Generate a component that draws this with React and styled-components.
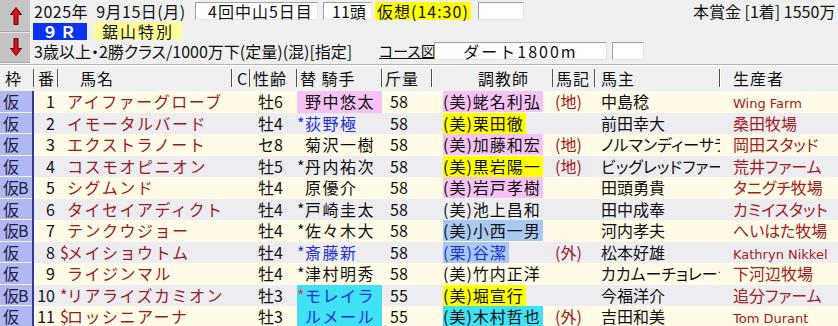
import styled, { createGlobalStyle } from "styled-components";

const GlobalStyle = createGlobalStyle`
  html, body { margin: 0; padding: 0; background: #f0f0f0; }
  body { font-family: "Noto Sans CJK JP", "Noto Sans", sans-serif; }
`;

const cols = "34px 24px 174px 18px 47px 85px 50px 121px 42px 125px 118px";

const hl = {
  pink: "#f7c3f7",
  yellow: "#ffff00",
  lblue: "#a9c9f1",
  cyan: "#3fe1f3",
  none: "transparent",
};

const ink = {
  black: "#101010",
  blue: "#1c2fe0",
  red: "#e0306a",
};

const rows = [
  { waku: "仮", no: 1, name: "アイファーグローブ", sex: "牡6", jockey: "野中悠太", jbg: "pink", kg: 58, trainer: "(美)蛯名利弘", tbg: "pink", mark: "(地)", owner: "中島稔", breeder: "Wing Farm", latin: true },
  { waku: "仮", no: 2, name: "イモータルバード", sex: "牡4", jp: "*", jockey: "荻野極", jc: "blue", kg: 58, trainer: "(美)栗田徹", tbg: "yellow", owner: "前田幸大", breeder: "桑田牧場" },
  { waku: "仮", no: 3, name: "エクストラノート", sex: "セ8", jockey: "菊沢一樹", kg: 58, trainer: "(美)加藤和宏", tbg: "pink", mark: "(地)", owner: "ノルマンディーサラブレッドレーシング", breeder: "岡田スタッド" },
  { waku: "仮", no: 4, name: "コスモオピニオン", sex: "牡5", jp: "*", jockey: "丹内祐次", kg: 58, trainer: "(美)黒岩陽一", tbg: "yellow", mark: "(地)", owner: "ビッグレッドファーム", breeder: "荒井ファーム" },
  { waku: "仮B", no: 5, name: "シグムンド", sex: "牡4", jockey: "原優介", kg: 58, trainer: "(美)岩戸孝樹", tbg: "pink", owner: "田頭勇貴", breeder: "タニグチ牧場" },
  { waku: "仮", no: 6, name: "タイセイアディクト", sex: "牡4", jp: "*", jockey: "戸崎圭太", kg: 58, trainer: "(美)池上昌和", owner: "田中成奉", breeder: "カミイスタット" },
  { waku: "仮B", no: 7, name: "テンクウジョー", sex: "牡4", jp: "*", jockey: "佐々木大", kg: 58, trainer: "(美)小西一男", tbg: "lblue", owner: "河内孝夫", breeder: "へいはた牧場" },
  { waku: "仮", no: 8, pre: "$", name: "メイショウトム", sex: "牡4", jp: "*", jockey: "斎藤新", jc: "blue", kg: 58, trainer: "(栗)谷潔", tbg: "lblue", tc: "blue", mark: "(外)", owner: "松本好雄", breeder: "Kathryn Nikkel", latin: true },
  { waku: "仮", no: 9, name: "ライジンマル", sex: "牡4", jp: "*", jockey: "津村明秀", kg: 58, trainer: "(美)竹内正洋", owner: "カカムーチョレーシング", breeder: "下河辺牧場" },
  { waku: "仮B", no: 10, pre: "*", name: "リアライズカミオン", sex: "牡3", jp: "*", jpc: "red", jockey: "モレイラ", jbg: "cyan", jc: "blue", kg: 55, trainer: "(美)堀宣行", tbg: "yellow", owner: "今福洋介", breeder: "追分ファーム" },
  { waku: "仮", no: 11, pre: "$", name: "ロッシニアーナ", sex: "牡3", jockey: "ルメール", jbg: "cyan", jc: "blue", kg: 55, trainer: "(美)木村哲也", tbg: "cyan", mark: "(外)", owner: "吉田和美", breeder: "Tom Durant", latin: true },
];

const Screen = styled.div`
  width: 838px;
  height: 326px;
  overflow: hidden;
  background: #f0f0f0;
  color: #101010;
  font-size: 16px;
`;

const Top = styled.div`
  display: flex;
  height: 63px;
`;

const ArrowCol = styled.div`
  width: 30px;
  display: flex;
  flex-direction: column;
  background: #c4c4c4;
`;

const ArrowBtn = styled.div`
  flex: 1;
  display: flex;
  align-items: center;
  justify-content: center;
  padding-left: 1px;
  border-top: 1px solid ${(p) => (p.$first ? "#c4c4c4" : "#e6e6e6")};
  border-bottom: 1px solid #a8a8a8;
`;

const Info = styled.div`
  flex: 1;
  display: flex;
  flex-direction: column;
  padding: 1px 0 0 4px;
`;

const InfoLine = styled.div`
  display: flex;
  align-items: center;
  height: 20px;
  white-space: nowrap;
`;

const Label = styled.span`
  display: inline-block;
  width: ${(p) => p.$w}px;
  margin-left: ${(p) => p.$ml || 0}px;
  letter-spacing: ${(p) => p.$ls || 0}px;
  font-size: ${(p) => p.$fs || 16}px;
  font-feature-settings: ${(p) => (p.$palt ? '"palt"' : "normal")};
  overflow: hidden;
  line-height: 20px;
  text-decoration: ${(p) => (p.$link ? "underline" : "none")};
`;

const Field = styled.span`
  display: inline-block;
  box-sizing: border-box;
  width: ${(p) => p.$w}px;
  height: 18px;
  margin-left: ${(p) => p.$ml || 0}px;
  line-height: 16px;
  background: #fff;
  border: 1px solid;
  border-color: #a0a0a0 #e4e4e4 #e4e4e4 #a0a0a0;
  text-align: ${(p) => p.$align || "left"};
  padding-left: ${(p) => p.$pl || 0}px;
  letter-spacing: ${(p) => p.$ls || 0}px;
`;

const Marker = styled.span`
  display: inline-block;
  margin-left: ${(p) => p.$ml || 0}px;
  padding: 0 2px;
  height: 18px;
  line-height: 18px;
  background: #ffff00;
  letter-spacing: 1px;
`;

const RaceNo = styled.span`
  display: inline-block;
  width: 54px;
  height: 17px;
  line-height: 17px;
  margin-left: -1px;
  background: #0c32f2;
  color: #fff;
  text-align: center;
  font-weight: 700;
  letter-spacing: 2px;
`;

const RaceName = styled.span`
  display: inline-block;
  width: 88px;
  height: 18px;
  line-height: 18px;
  margin-left: 7px;
  background: #ffff99;
  text-align: center;
  letter-spacing: 2px;
`;

const Prize = styled.span`
  margin-left: auto;
  width: 145px;
  overflow: hidden;
  line-height: 20px;
`;

const Divider = styled.div`
  height: 1px;
  margin-top: 1px;
  background: #b4b4b4;
  border-bottom: 1px solid #fff;
`;

const HeadRow = styled.div`
  display: grid;
  grid-template-columns: ${cols};
  height: 24px;
  margin-bottom: 1px;
`;

const HeadCell = styled.div`
  position: relative;
  line-height: 24px;
  padding-left: ${(p) => p.$pl || 0}px;
  white-space: nowrap;
  letter-spacing: 1px;

  &::after {
    content: "";
    display: ${(p) => (p.$last ? "none" : "block")};
    position: absolute;
    right: 0;
    top: 3px;
    bottom: 3px;
    width: 1px;
    background: #505050;
    box-shadow: 1px 0 0 #fff;
  }
`;

const Row = styled.div`
  display: grid;
  grid-template-columns: ${cols};
  height: 21.5px;
  background: ${(p) => (p.$odd ? "#ededf1" : "#fffbe6")};
`;

const Cell = styled.div`
  line-height: 21.5px;
  white-space: nowrap;
  overflow: hidden;
  padding-left: ${(p) => p.$pl || 0}px;
  text-align: ${(p) => p.$align || "left"};
  padding-right: ${(p) => p.$pr || 0}px;
  color: ${(p) => p.$color || "#101010"};
  letter-spacing: ${(p) => p.$ls || 0}px;
  background: ${(p) => (p.$bg ? hl[p.$bg] : "transparent")};
  font-feature-settings: ${(p) => (p.$palt ? '"palt"' : "normal")};
`;

const WakuCell = styled(Cell)`
  background: #b1b8f1;
  border-right: 2px solid #2d3a9a;
  box-shadow: inset 0 -1px 0 #f4f4ff;
  padding-left: 3px;
  letter-spacing: -1px;
  color: #20204a;
`;

const Prefix = styled.span`
  display: inline-block;
  width: ${(p) => p.$w}px;
  color: ${(p) => (p.$c ? ink[p.$c] : "inherit")};
  letter-spacing: 0;
`;

const Hl = styled.span`
  display: inline-block;
  height: 21px;
  padding-right: 2px;
  background: ${(p) => hl[p.$bg || "none"]};
  color: ${(p) => ink[p.$c || "black"]};
`;

const Latin = styled.span`
  font-family: "DejaVu Sans", "Liberation Sans", sans-serif;
  font-size: 13px;
  letter-spacing: 0;
`;

const Arrow = ({ down }) => (
  <svg width="12" height="18" viewBox="0 0 12 18">
    <polygon
      points="6,0.5 11.5,7.5 8,7.5 8,17.5 4,17.5 4,7.5 0.5,7.5"
      fill="#e41010"
      stroke="#5a0000"
      strokeWidth="1"
      transform={down ? "rotate(180 6 9)" : undefined}
    />
  </svg>
);

const heads = [
  { t: "枠", pl: 5 },
  { t: "番", pl: 4 },
  { t: "馬名", pl: 22 },
  { t: "C", pl: 5 },
  { t: "性齢", pl: 3 },
  { t: "替 騎手", pl: 3 },
  { t: "斤量", pl: 3 },
  { t: "調教師", pl: 46 },
  { t: "馬記", pl: 3 },
  { t: "馬主", pl: 6 },
  { t: "生産者", pl: 13 },
];

export default function App() {
  return (
    <>
      <GlobalStyle />
      <Screen>
        <Top>
          <ArrowCol>
            <ArrowBtn $first>
              <Arrow />
            </ArrowBtn>
            <ArrowBtn>
              <Arrow down />
            </ArrowBtn>
          </ArrowCol>
          <Info>
            <InfoLine>
              <Label $w={161} $ls={0.5}>2025年 &nbsp;9月15日(月)</Label>
              <Field $w={123} $pl={12} $ls={1}>4回中山5日目</Field>
              <Field $w={49} $ml={5} $pl={8}>11頭</Field>
              <Marker $ml={3}>仮想(14:30)</Marker>
              <Field $w={46} $ml={7} />
              <Prize>本賞金 [1着] 1550万 [2着] 620万</Prize>
            </InfoLine>
            <InfoLine>
              <RaceNo>９Ｒ</RaceNo>
              <RaceName>鋸山特別</RaceName>
            </InfoLine>
            <InfoLine>
              <Label $w={345} $palt>3歳以上・2勝クラス/1000万下(定量)(混)[指定]</Label>
              <Label $w={55} $fs={15} $palt $link>コース図</Label>
              <Field $w={173} $align="center" $ls={2}>ダート1800m</Field>
              <Field $w={32} $ml={5} />
            </InfoLine>
          </Info>
        </Top>
        <Divider />
        <HeadRow>
          {heads.map((h, i) => (
            <HeadCell key={h.t} $pl={h.pl} $last={i === heads.length - 1}>
              {h.t}
            </HeadCell>
          ))}
        </HeadRow>
        {rows.map((r, i) => (
          <Row key={r.no} $odd={i % 2 === 1}>
            <WakuCell>{r.waku}</WakuCell>
            <Cell $align="right" $pr={3}>{r.no}</Cell>
            <Cell $pl={2} $color="#981c1c" $ls={1.5}>
              <Prefix $w={7}>{r.pre}</Prefix>
              {r.name}
            </Cell>
            <Cell />
            <Cell $pl={8}>{r.sex}</Cell>
            <Cell $bg={r.jbg} $ls={1.5} $color={ink[r.jc || "black"]}>
              <Prefix $w={8} $c={r.jpc}>{r.jp}</Prefix>
              {r.jockey}
            </Cell>
            <Cell $pl={8}>{r.kg}</Cell>
            <Cell $pl={11} $ls={1}>
              <Hl $bg={r.tbg} $c={r.tc}>{r.trainer}</Hl>
            </Cell>
            <Cell $pl={2} $color="#a01818">{r.mark}</Cell>
            <Cell $pl={6} $palt>{r.owner}</Cell>
            <Cell $pl={13} $color="#a41c1c" $palt>
              {r.latin ? <Latin>{r.breeder}</Latin> : r.breeder}
            </Cell>
          </Row>
        ))}
      </Screen>
    </>
  );
}
